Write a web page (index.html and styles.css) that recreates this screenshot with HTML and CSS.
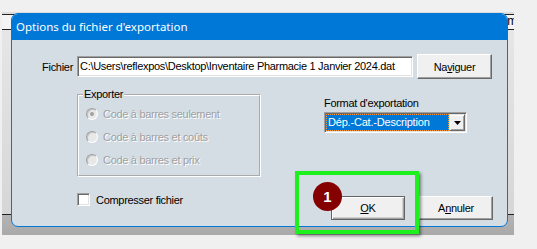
FILE: index.html
```html
<!DOCTYPE html>
<html>
<head>
    <meta charset="utf-8">
    <title>Options du fichier d'exportation</title>
    <link rel="stylesheet" href="styles.css">
</head>
<body>
<div class="desktop">

    <!-- window behind the dialog -->
    <div class="backwin">
        <div class="back-bar"><span>m</span></div>
        <div class="back-body"></div>
        <div class="back-foot"></div>
    </div>

    <div class="dialog">
        <div class="titlebar">Options du fichier d'exportation</div>

        <div class="dlg-body">
            <div class="row-file">
                <label class="lbl-file">Fichier</label>
                <div class="edit">C:\Users\reflexpos\Desktop\Inventaire Pharmacie 1 Janvier 2024.dat</div>
                <button class="btn btn-nav">Na<u>v</u>iguer</button>
            </div>

            <div class="row-mid">
                <fieldset class="group">
                    <legend>Exporter</legend>
                    <div class="radio-row"><span class="radio checked"></span><span class="dis">Code à barres seulement</span></div>
                    <div class="radio-row"><span class="radio"></span><span class="dis">Code à barres et coûts</span></div>
                    <div class="radio-row"><span class="radio"></span><span class="dis">Code à barres et prix</span></div>
                </fieldset>

                <div class="fmt">
                    <div class="fmt-label">Format d'exportation</div>
                    <div class="combo">
                        <div class="combo-sel">Dép.-Cat.-Description</div>
                        <div class="combo-btn">
                            <svg width="7" height="4" viewBox="0 0 7 4"><polygon points="0,0 7,0 3.5,4" fill="#000"/></svg>
                        </div>
                    </div>
                </div>
            </div>

            <div class="row-bottom">
                <div class="check-row"><span class="check"></span>Compresser fichier</div>
                <div class="buttons">
                    <button class="btn btn-default"><u>O</u>K</button>
                    <button class="btn">A<u>n</u>nuler</button>
                </div>
            </div>
        </div>
    </div>

    <!-- annotation drawn over the screenshot -->
    <div class="callout"></div>
    <div class="badge">1</div>
</div>
</body>
</html>
```

FILE: styles.css
```css
body
{
    margin: 0;
    background: #f0f0f0;
    font-family: "Liberation Sans", Arial, sans-serif;
    font-size: 11px;
    letter-spacing: -0.3px;
    color: #000;
}
.desktop
{
    position: relative;
    width: 537px;
    height: 249px;
    overflow: hidden;
}

/* window behind */
.backwin
{
    position: absolute;
    left: 2px;
    top: 12px;
    width: 512px;
    height: 223px;
    display: flex;
    flex-direction: column;
    background: #dcdcdc;
    padding-top: 2px;
    box-sizing: border-box;
    overflow: hidden;
}
.back-bar
{
    height: 16px;
    box-sizing: border-box;
    border-top: 1px solid #222;
    border-bottom: 1px solid #222;
    background: #f4f4f4;
    display: flex;
    justify-content: flex-end;
    line-height: 13px;
    font-size: 12px;
}
.back-bar span
{
    margin-right: -3px;
}
.back-body
{
    flex: 1;
    background: linear-gradient(#e6e6e6, #d6d6d6);
}
.back-foot
{
    height: 21px;
    box-sizing: border-box;
    border-top: 1px solid #222;
    background: linear-gradient(#b4b4b4, #a9a9a9);
}

/* dialog */
.dialog
{
    position: absolute;
    left: 11px;
    top: 13px;
    width: 497px;
    height: 214px;
    box-sizing: border-box;
    border: 1px solid #0078d7;
    border-radius: 7px;
    background: #d4dce4;
    overflow: hidden;
}
.titlebar
{
    height: 26px;
    background: #0078d7;
    color: #fff;
    font-family: "Noto Sans", sans-serif;
    font-size: 11.5px;
    letter-spacing: 0;
    line-height: 26px;
    padding-left: 4px;
}
.row-file
{
    display: grid;
    grid-template-columns: 61px 336px 75px;
    column-gap: 4px;
    align-items: center;
    margin-top: 14px;
}
.lbl-file
{
    text-align: right;
}
.edit
{
    height: 21px;
    box-sizing: border-box;
    border: 1px solid;
    border-color: #a0a0a0 #fff #fff #a0a0a0;
    box-shadow: inset 1px 1px #696969, inset -1px -1px #e3e3e3;
    background: #fff;
    padding: 0 2px;
    line-height: 19px;
    white-space: nowrap;
    overflow: hidden;
}
.btn
{
    width: 74px;
    height: 24px;
    box-sizing: border-box;
    padding: 0;
    border: 1px solid;
    border-color: #fff #696969 #696969 #fff;
    box-shadow: inset -1px -1px #a0a0a0;
    background: #f0f0f0;
    font: inherit;
    font-weight: normal;
    letter-spacing: inherit;
    color: #000;
}
.btn-nav
{
    width: 75px;
    height: 25px;
}
.btn-default
{
    border-color: #646464;
    box-shadow: inset 1px 1px #fff, inset -1px -1px #a0a0a0, inset -2px -2px #d0d0d0;
}

/* middle part */
.row-mid
{
    display: flex;
    align-items: flex-start;
    margin-top: 9px;
    padding-left: 65px;
}
.group
{
    margin: 0;
    width: 184px;
    box-sizing: border-box;
    padding: 1px 0 4px 7px;
    border: 2px groove #fff;
    min-inline-size: 0;
}
.group legend
{
    padding: 0 1px;
    margin-left: -3px;
    line-height: 13px;
}
.radio-row
{
    height: 23px;
    display: flex;
    align-items: center;
}
.radio
{
    width: 12px;
    height: 12px;
    box-sizing: border-box;
    border-radius: 50%;
    border: 1px solid;
    border-color: #a0a0a0 #fff #fff #a0a0a0;
    box-shadow: inset 1px 1px #c4c4c4;
    background: #e8e8e8;
    margin-right: 5px;
    display: flex;
    align-items: center;
    justify-content: center;
}
.radio.checked::after
{
    content: "";
    width: 4px;
    height: 4px;
    border-radius: 50%;
    background: #a0a0a0;
}
.dis
{
    color: #a0a0a0;
    text-shadow: 1px 1px 0 #fff;
}
.fmt
{
    margin-left: 63px;
    margin-top: 9px;
}
.fmt-label
{
    line-height: 13px;
    margin-bottom: 2px;
}
.combo
{
    width: 143px;
    height: 21px;
    box-sizing: border-box;
    border: 1px solid;
    border-color: #a0a0a0 #fff #fff #a0a0a0;
    box-shadow: inset 1px 1px #696969, inset -1px -1px #e3e3e3;
    background: #fff;
    padding: 1px;
    display: flex;
}
.combo-sel
{
    flex: 1;
    background: #0078d7;
    color: #fff;
    border: 1px dotted #ff9a3c;
    padding-left: 1px;
    line-height: 15px;
    letter-spacing: -0.2px;
    white-space: nowrap;
}
.combo-btn
{
    width: 16px;
    box-sizing: border-box;
    background: #f0f0f0;
    border: 1px solid;
    border-color: #e3e3e3 #696969 #696969 #e3e3e3;
    box-shadow: inset 1px 1px #fff, inset -1px -1px #a0a0a0;
    display: flex;
    align-items: center;
    justify-content: center;
}

/* bottom part */
.row-bottom
{
    display: flex;
    align-items: flex-start;
    margin-top: 16px;
    padding-left: 65px;
    padding-right: 14px;
}
.check-row
{
    display: flex;
    align-items: center;
    height: 13px;
}
.check
{
    width: 13px;
    height: 13px;
    box-sizing: border-box;
    border: 1px solid;
    border-color: #a0a0a0 #fff #fff #a0a0a0;
    box-shadow: inset 1px 1px #696969, inset -1px -1px #e3e3e3;
    background: #fff;
    margin-right: 6px;
}
.buttons
{
    margin-left: auto;
    margin-top: 3px;
    display: flex;
    gap: 14px;
}

/* annotation */
.callout
{
    position: absolute;
    left: 295px;
    top: 171px;
    width: 124px;
    height: 63px;
    box-sizing: border-box;
    border: 4px solid #1ef01e;
    box-shadow: 2px 2px 3px rgba(0, 0, 0, 0.45);
}
.badge
{
    position: absolute;
    left: 313px;
    top: 182px;
    width: 29px;
    height: 29px;
    border-radius: 50%;
    background: #850000;
    color: #fff;
    font-size: 15px;
    font-weight: bold;
    letter-spacing: 0;
    line-height: 29px;
    text-align: center;
}
```
